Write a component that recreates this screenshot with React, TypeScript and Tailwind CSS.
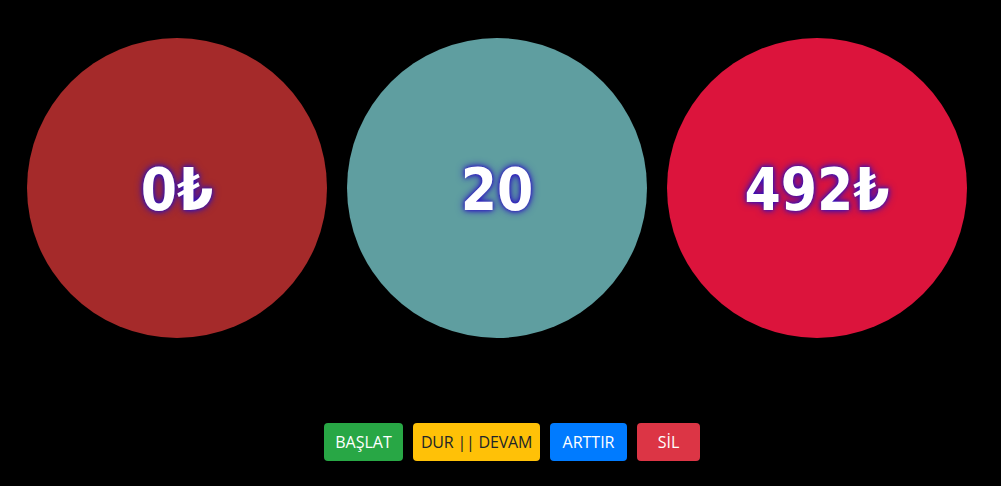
export default function App() {
  const circles = [
    { label: '0₺', bg: 'bg-[#a52a2a]' },
    { label: '20', bg: 'bg-[#5f9ea0]' },
    { label: '492₺', bg: 'bg-[#dc143c]' },
  ];

  return (
    <div className="min-h-[486px] bg-black font-['Open_Sans',sans-serif]">
      {/* Counters */}
      <div className="flex gap-5 pl-[27px] pt-[38px]">
        {circles.map((c, i) => (
          <div
            key={i}
            className={`w-[300px] h-[300px] rounded-full ${c.bg} flex items-center justify-center`}
          >
            <span className="pt-1 text-[58px] font-bold text-white font-['DejaVu_Sans_Condensed','DejaVu_Sans',sans-serif] [text-shadow:0_0_8px_#2a10c0,0_0_4px_#2a10c0]">
              {c.label}
            </span>
          </div>
        ))}
      </div>

      {/* Controls */}
      <div className="flex gap-[10px] pl-[324px] mt-[85px]">
        <button className="h-[38px] w-[79px] rounded bg-[#28a745] text-white text-base">BAŞLAT</button>
        <button className="h-[38px] w-[127px] rounded bg-[#ffc107] text-[#212529] text-base tracking-[-0.2px]">DUR || DEVAM</button>
        <button className="h-[38px] w-[77px] rounded bg-[#007bff] text-white text-base">ARTTIR</button>
        <button className="h-[38px] w-[63px] rounded bg-[#dc3545] text-white text-base">SİL</button>
      </div>
    </div>
  );
}
